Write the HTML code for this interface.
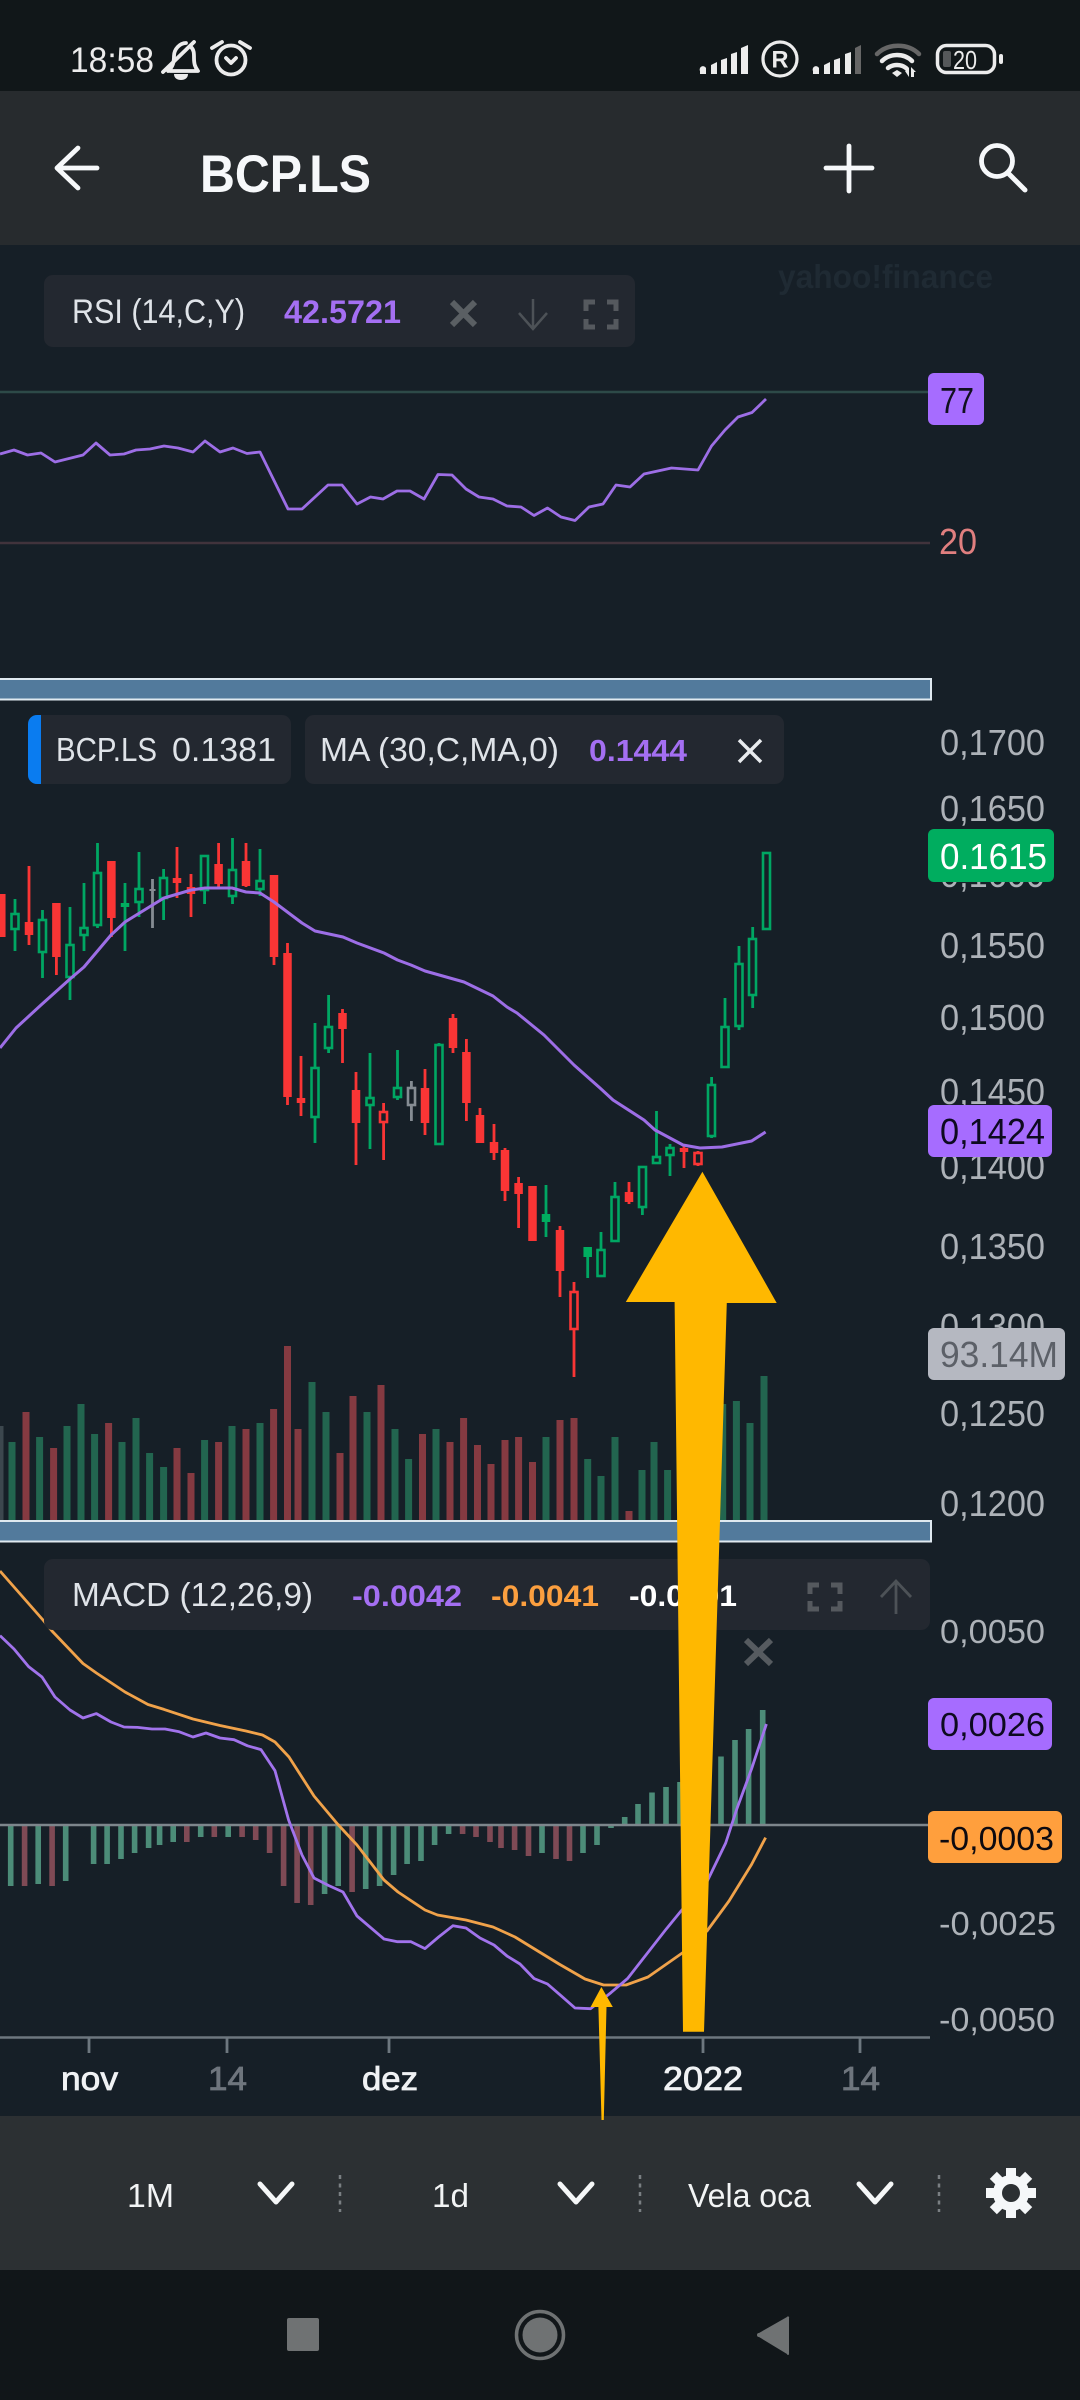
<!DOCTYPE html>
<html><head><meta charset="utf-8"><title>BCP.LS</title>
<style>html,body{margin:0;padding:0;background:#161f27}svg{display:block}text{font-family:"Liberation Sans",sans-serif}</style></head>
<body>
<svg xmlns="http://www.w3.org/2000/svg" width="1080" height="2400" viewBox="0 0 1080 2400">
<rect width="1080" height="2400" fill="#161f27"/>
<rect width="1080" height="91" fill="#111719"/>
<rect y="91" width="1080" height="154" fill="#272b2e"/>

<!-- status bar -->
<text x="70" y="72" font-size="35" fill="#ececec" textLength="84" lengthAdjust="spacingAndGlyphs">18:58</text>
<g fill="none" stroke="#ececec" stroke-width="3.800" stroke-linecap="round" stroke-linejoin="round">
<path d="M168 71c5-4 6-9 6-15 0-7 6-13 12-13M191 47c3 3 3 6 3 11 0 6 1 9 4 13H170"/>
<path d="M163 72L194 42"/>
<circle cx="231" cy="60" r="14.500"/>
<path d="M212 48l10-6M240 42l10 6M226 58l5 5 5-5"/>
</g>
<path d="M174 74h14c0 4-3 6-7 6s-7-2-7-6z" fill="#ececec"/>
<g fill="#ececec">
<path d="M700 74v-3a3 3 0 0 1 6-3v6zM711 74V65l6-3v12zM721 74V60l6-2v16zM731 74V54l6-2v22zM741 74V48l7-3v29z"/>
<path d="M813 74v-3a3 3 0 0 1 6-3v6zM824 74V65l6-3v12zM834 74V60l6-2v16zM845 74V54l6-2v22z"/>
</g>
<path d="M855 74V48l6-3v29z" fill="#666"/>
<circle cx="780" cy="59" r="17" fill="none" stroke="#ececec" stroke-width="3.200"/>
<text x="771.500" y="67.500" font-size="24" font-weight="bold" fill="#ececec" textLength="17" lengthAdjust="spacingAndGlyphs">R</text>
<g fill="none" stroke-linecap="round">
<path d="M877 54c11-11 31-11 42 0" stroke="#666" stroke-width="4.500"/>
<path d="M882 61c8-8 22-8 30 0" stroke="#ececec" stroke-width="4.500"/>
<path d="M888 68c5-4 13-4 18 0" stroke="#ececec" stroke-width="4.500"/>
</g>
<path d="M892 73l5-3 5 3-5 4z" fill="#ececec"/>
<path d="M905 71l4-4v10zM911 67l5 5h-2v5h-3z" fill="#ececec"/>
<rect x="937.500" y="45.500" width="57" height="27" rx="9" fill="none" stroke="#ececec" stroke-width="3.500"/>
<rect x="943" y="51" width="8" height="16" rx="2" fill="#55585a"/>
<rect x="999" y="54" width="4" height="10" rx="2" fill="#ececec"/>
<text x="953" y="69" font-size="26" fill="#ececec" textLength="24" lengthAdjust="spacingAndGlyphs">20</text>

<!-- header -->
<text x="200" y="192" font-size="53" font-weight="bold" fill="#f6f8fa" textLength="171" lengthAdjust="spacingAndGlyphs">BCP.LS</text>
<g fill="none" stroke="#f6f8fa" stroke-width="4.800" stroke-linecap="round" stroke-linejoin="round">
<path d="M97 168H58M78 148L57 168l21 20"/>
<path d="M849 146v45M826 168h46"/>
<circle cx="997" cy="161" r="15.500"/>
<path d="M1008 173l17 17" stroke-width="5"/>
</g>

<!-- watermark -->
<text x="778" y="288" font-size="33" font-weight="bold" fill="#1f2a33" textLength="215" lengthAdjust="spacingAndGlyphs">yahoo!finance</text>

<!-- RSI panel -->
<path d="M0 392H928" stroke="#2d4a48" stroke-width="2.500"/>
<path d="M0 543H930" stroke="#41333c" stroke-width="2.500"/>
<path fill="none" stroke="#9d6ee6" stroke-width="2.800" stroke-linejoin="round" d="M0 454L14 450 27.500 455 41 453 55 462 83 455 96 443 110 455 124 454 136 450 150 449 164 446 178 448 193 452 205 441 220 452 233 448 247 453.500 260 452 288 509 302 509 328 485 342 485 357 504 370.500 497 383 499 397 491 410 491 424 499 438 474.500 452 475 466 489 479 497 493 499 507 506 521 507 534 515.500 547.500 508 561 517 575 520.500 589 507 603 504 616 485 630 487 644 474 671.500 468 698 470 711.500 446 725 430 738 417 752 412.500 766 399"/>
<rect x="44" y="275" width="591" height="72" rx="9" fill="#232830"/>
<text x="72" y="323" font-size="34" fill="#dfe3e8" textLength="173" lengthAdjust="spacingAndGlyphs">RSI (14,C,Y)</text>
<text x="284" y="323" font-size="32" font-weight="bold" fill="#a46ff2" textLength="117" lengthAdjust="spacingAndGlyphs">42.5721</text>
<path d="M452 302l23 23M475 302l-23 23" stroke="#5a5f63" stroke-width="6" fill="none"/>
<path d="M533 299v29M519 313l14 16 14-16" stroke="#4d5257" stroke-width="2.500" fill="none"/>
<path d="M586 311v-9h9M607 302h9v9M616 319v8h-9M595 327h-9v-8" stroke="#55595e" stroke-width="5" fill="none"/>
<rect x="928" y="373" width="56" height="52" rx="6" fill="#a66cff"/>
<text x="940" y="413" font-size="36" fill="#11101f" textLength="34" lengthAdjust="spacingAndGlyphs">77</text>
<text x="939" y="554" font-size="36" fill="#e07f7f" textLength="38" lengthAdjust="spacingAndGlyphs">20</text>

<!-- y axis labels (main) -->
<g font-size="36" fill="#adb2b8">
<text x="940" y="755" textLength="105" lengthAdjust="spacingAndGlyphs">0,1700</text>
<text x="940" y="821" textLength="105" lengthAdjust="spacingAndGlyphs">0,1650</text>
<text x="940" y="887" textLength="105" lengthAdjust="spacingAndGlyphs">0,1600</text>
<text x="940" y="958" textLength="105" lengthAdjust="spacingAndGlyphs">0,1550</text>
<text x="940" y="1030" textLength="105" lengthAdjust="spacingAndGlyphs">0,1500</text>
<text x="940" y="1104" textLength="105" lengthAdjust="spacingAndGlyphs">0,1450</text>
<text x="940" y="1179" textLength="105" lengthAdjust="spacingAndGlyphs">0,1400</text>
<text x="940" y="1259" textLength="105" lengthAdjust="spacingAndGlyphs">0,1350</text>
<text x="940" y="1339" textLength="105" lengthAdjust="spacingAndGlyphs">0,1300</text>
<text x="940" y="1426" textLength="105" lengthAdjust="spacingAndGlyphs">0,1250</text>
<text x="940" y="1516" textLength="105" lengthAdjust="spacingAndGlyphs">0,1200</text>
</g>

<!-- volume -->
<g fill="none" stroke-width="7">
<path stroke="#3c474e" d="M0 1426V1520"/>
<path stroke="#22654f" d="M12 1442V1520M39.600 1437V1520M67 1426V1520M81 1404V1520M94.600 1434V1520M122 1442V1520M136 1418V1520M149.600 1453V1520M163.600 1467V1520M204.600 1440V1520M232 1426V1520M260 1423V1520M312 1382V1520M326 1412V1520M367 1412V1520M395 1429V1520M408.600 1459V1520M436 1429V1520M546 1437V1520M587.700 1459V1520M601 1476V1520M615 1437V1520M642 1470V1520M654 1442V1520M667.600 1470V1520M722.700 1404V1520M736.400 1401V1520M750 1423V1520M764 1376V1520"/>
<path stroke="#853a41" d="M26 1412V1520M53.600 1448V1520M108.600 1423V1520M177 1448V1520M191 1473V1520M218.600 1442V1520M246 1429V1520M273.600 1409V1520M287.500 1346V1520M298 1429V1520M340 1453V1520M353 1396V1520M381 1385V1520M422.500 1434V1520M450 1442V1520M463.600 1418V1520M477.500 1445V1520M491 1464V1520M505 1440V1520M518.600 1437V1520M532.500 1462V1520M560 1420V1520M574 1418V1520M629 1511V1520"/>
</g>

<!-- candle wicks -->
<g fill="none" stroke-width="2.800">
<path stroke="#00a663" d="M15 899V951M42.500 910V978M70 907V1000M84 883V951M97.500 843V928M125 883V951M139 852V917M163.600 869V920M204.600 855V904M232.500 838V904M260 849V896M315 1023V1143M328.600 995V1053M370 1053V1149M397.500 1050V1100M439 1043V1144M546 1185V1237M587.700 1247V1278M601 1232V1276M615 1182V1241M642.400 1167V1215M656.500 1111V1163M670 1144V1176M711.600 1077V1138M725 998V1067M739 946V1030M752.700 927V1008"/>
<path stroke="#f93535" d="M29 866V945M56.400 903V975M111.400 861V937M177 847V898M191 874V917M218.600 843V887M246 843V887M274 875V965M287.500 943V1105M301 1056V1116M342.500 1009V1063M356 1072V1165M383.600 1103V1160M425 1069V1135M453 1014V1053M466.400 1039V1121M480 1108V1143M494 1124V1160M505 1148V1201M518.600 1177V1228M560 1226V1297M574 1282V1377M629 1182V1204M684 1145V1168M698 1151V1166"/>
<path stroke="#858c93" d="M152.500 879V928M411.400 1081V1121"/>
</g>
<!-- filled bodies -->
<g fill="none" stroke-width="8.500">
<path stroke="#f93535" d="M1.300 894V937M29 922V935M56.400 903V957M111.400 861V918M177 878V883M191 887V894M218.600 864V884M246 861V886M274 875V957M287.500 953V1097M301 1098V1103M342.500 1013V1029M356 1090V1123M425 1088V1123M453 1018V1048M466.400 1052V1103M480 1115V1143M494 1142V1153M505 1150V1191M518.600 1183V1194M532.500 1186V1241M560 1230V1271M629 1192V1202M684 1148V1152"/>
<path stroke="#00ad5f" d="M125 903V907M546 1214V1222M587.700 1247V1257"/>
<path stroke="#858c93" d="M152.500 889V891" stroke-width="6"/>
</g>
<!-- hollow bodies -->
<g fill="#161f27" stroke-width="2.600">
<g stroke="#00a663">
<rect x="11.500" y="914" width="7" height="15"/><rect x="39" y="920" width="7" height="32"/><rect x="66.500" y="945" width="7" height="32"/><rect x="80.500" y="928" width="7" height="7"/><rect x="94" y="873" width="7" height="52"/><rect x="135.500" y="889" width="7" height="13"/><rect x="160" y="878" width="7" height="20"/><rect x="201" y="856" width="7" height="34"/><rect x="229" y="870" width="7" height="26"/><rect x="256.500" y="881" width="7" height="8"/><rect x="311.500" y="1068" width="7" height="49"/><rect x="325" y="1027" width="7" height="21"/><rect x="366.500" y="1098" width="7" height="7"/><rect x="394" y="1088" width="7" height="9"/><rect x="435.500" y="1045" width="7" height="99"/><rect x="597.500" y="1250" width="7" height="26"/><rect x="611.500" y="1197" width="7" height="44"/><rect x="639" y="1167" width="7" height="40"/><rect x="653" y="1157" width="7" height="6"/><rect x="666.500" y="1148" width="7" height="7"/><rect x="708" y="1085" width="7" height="51"/><rect x="721.500" y="1027" width="7" height="40"/><rect x="735.500" y="964" width="7" height="62"/><rect x="749" y="939" width="7" height="56"/><rect x="763" y="853" width="7" height="76"/>
</g>
<g stroke="#f93535">
<rect x="380" y="1112" width="7" height="10"/><rect x="570.500" y="1292" width="7" height="37"/><rect x="694.500" y="1153" width="7" height="11"/>
</g>
<rect x="408" y="1088" width="7" height="17" stroke="#858c93"/>
</g>

<!-- MA line -->
<path fill="none" stroke="#9d6ee6" stroke-width="3" stroke-linejoin="round" d="M0 1048L16 1028 41 1005 70 979 84 967 111 935 125 922 152.500 905 164 898 191 890 205 888 232 888 246 892 260 893 274 902 302 923 315 931 343 937 357 943 384 953 397.500 960 411 965 425 971 464 982 493 996 507 1007 517 1013 544 1035 574 1065 600 1088 613 1100 644 1120 655 1130 683 1145 700 1148 722 1147 751.600 1141 765.600 1132"/>

<!-- separators -->
<rect x="-3" y="679" width="934" height="20.500" fill="#527a9c" stroke="#dfe9f0" stroke-width="2"/>
<rect x="-3" y="1521" width="934" height="20.500" fill="#527a9c" stroke="#dfe9f0" stroke-width="2"/>

<!-- main labels -->
<rect x="28" y="715" width="263" height="69" rx="9" fill="#232830"/>
<path d="M41 715h-4a9 9 0 0 0-9 9v51a9 9 0 0 0 9 9h4z" fill="#0a7cf0"/>
<text x="56" y="761" font-size="33" fill="#dfe3e8" textLength="101" lengthAdjust="spacingAndGlyphs">BCP.LS</text>
<text x="172" y="761" font-size="33" fill="#dfe3e8" textLength="104" lengthAdjust="spacingAndGlyphs">0.1381</text>
<rect x="305" y="715" width="479" height="69" rx="9" fill="#232830"/>
<text x="320" y="761" font-size="33" fill="#dfe3e8" textLength="239" lengthAdjust="spacingAndGlyphs">MA (30,C,MA,0)</text>
<text x="589" y="761" font-size="31" font-weight="bold" fill="#a46ff2" textLength="98" lengthAdjust="spacingAndGlyphs">0.1444</text>
<path d="M739 740l22 22M761 740l-22 22" stroke="#e8ebee" stroke-width="3.500" fill="none"/>

<!-- badges -->
<rect x="928" y="829" width="126" height="53" rx="6" fill="#00ad5f"/>
<text x="940" y="869" font-size="36" fill="#ffffff" textLength="107" lengthAdjust="spacingAndGlyphs">0.1615</text>
<rect x="928" y="1105" width="124" height="52" rx="6" fill="#a66cff"/>
<text x="940" y="1144" font-size="36" fill="#0d0a20" textLength="105" lengthAdjust="spacingAndGlyphs">0,1424</text>
<rect x="928" y="1328" width="137" height="52" rx="6" fill="#b5b8c1"/>
<text x="940" y="1367" font-size="36" fill="#5c6068" textLength="118" lengthAdjust="spacingAndGlyphs">93.14M</text>

<!-- MACD panel -->
<g fill="none" stroke-width="5.600">
<path stroke="#4c8c78" d="M10.700 1825V1886M38.200 1825V1884M65.700 1825V1881M93.600 1825V1864M107.100 1825V1864M121 1825V1859M134.600 1825V1853M148.600 1825V1848M159.600 1825V1845M173.200 1825V1842M200.700 1825V1837M228.200 1825V1837M324.600 1825V1894M338.200 1825V1886M365.700 1825V1889M379.600 1825V1886M393.600 1825V1875M407.100 1825V1864M421 1825V1861M434.600 1825V1845M448.600 1825V1834M542 1825V1853M583 1825V1853M597 1825V1845M611 1825V1828M624.700 1825V1817M638 1825V1804M652 1825V1792.500M666 1825V1787M680 1825V1782M721 1825V1756.500M735 1825V1740M748.600 1825V1729M762.700 1825V1710"/>
<path stroke="#7f4a55" d="M24.600 1825V1886M52.100 1825V1886M186.800 1825V1842M214.300 1825V1837M242.100 1825V1837M255.700 1825V1840M269.600 1825V1853M283.600 1825V1886M297.100 1825V1903M310.700 1825V1905M352.100 1825V1892M462.600 1825V1834M476 1825V1837M490 1825V1842M501 1825V1848M514.600 1825V1850M528.500 1825V1856M556 1825V1859M569.500 1825V1861"/>
</g>
<path d="M0 1825H928" stroke="#7d868c" stroke-width="2.500"/>
<path fill="none" stroke="#f0a24a" stroke-width="2.800" stroke-linejoin="round" d="M0 1571L43 1620 52 1631 83 1663.500 96.400 1673 125 1692 148 1704.500 164 1709.400 193 1719 220 1725.500 246 1731 262.500 1735 275 1742 289 1757 314 1796 337.500 1824 357 1845 384 1880 398 1892 425 1910 437.500 1915 466 1920 493 1927 515 1937 559 1964 585 1979 603.600 1985 626 1985 648 1977 683 1952.500 707 1931 729 1901 751.600 1864.400 765.600 1837.600"/>
<path fill="none" stroke="#a173ec" stroke-width="2.800" stroke-linejoin="round" d="M0 1635.600L14 1649 28.600 1666.600 42 1677 55 1697 70 1710 83 1718 96.400 1713.600 111 1722 124 1727 137.500 1727.400 152 1729 165 1729 178.600 1731.600 193 1737 206 1733 220 1738 234 1739.700 247.500 1745.800 261 1749.600 275 1770.700 288.600 1820 302 1855 314 1878 328.600 1885.500 343 1892 357 1916 384 1939 397.500 1941.700 411 1941.700 425 1948.600 438.600 1937 453 1925.700 466 1928 480 1938 494 1945 507 1956 520 1964 534 1978.500 547.500 1984 561 1995.700 575 2008 590.600 2008.700 611 1992.600 627.600 1978.500 666.500 1928.700 681 1911 707 1881.600 725.700 1843 736.800 1809 751.600 1768.800 766.400 1724"/>
<rect x="44" y="1559" width="886" height="71" rx="9" fill="#232830"/>
<text x="72" y="1606" font-size="33" fill="#dfe3e8" textLength="241" lengthAdjust="spacingAndGlyphs">MACD (12,26,9)</text>
<text x="352" y="1606" font-size="30" font-weight="bold" fill="#a46ff2" textLength="110" lengthAdjust="spacingAndGlyphs">-0.0042</text>
<text x="491" y="1606" font-size="30" font-weight="bold" fill="#fb9f3f" textLength="108" lengthAdjust="spacingAndGlyphs">-0.0041</text>
<text x="629" y="1606" font-size="30" font-weight="bold" fill="#ffffff" textLength="108" lengthAdjust="spacingAndGlyphs">-0.0001</text>
<path d="M810 1594v-9h9M831 1585h9v9M840 1601v8h-9M819 1609h-9v-8" stroke="#55595e" stroke-width="5" fill="none"/>
<path d="M896 1614v-33M881 1597l15-16 15 16" stroke="#4d5257" stroke-width="2.800" fill="none"/>
<path d="M746 1640l25 24M771 1640l-25 24" stroke="#565b60" stroke-width="6" fill="none"/>

<g font-size="33" fill="#adb2b8">
<text x="940" y="1643" textLength="105" lengthAdjust="spacingAndGlyphs">0,0050</text>
<text x="939" y="1935" textLength="117" lengthAdjust="spacingAndGlyphs">-0,0025</text>
<text x="939" y="2031" textLength="116" lengthAdjust="spacingAndGlyphs">-0,0050</text>
</g>
<rect x="928" y="1698" width="124" height="52" rx="6" fill="#a66cff"/>
<text x="940" y="1736" font-size="33" fill="#0d0a20" textLength="105" lengthAdjust="spacingAndGlyphs">0,0026</text>
<rect x="928" y="1811" width="134" height="52" rx="6" fill="#ff9f3d"/>
<text x="939" y="1850" font-size="33" fill="#0d0a10" textLength="115" lengthAdjust="spacingAndGlyphs">-0,0003</text>

<!-- x axis -->
<path d="M0 2037.500H930" stroke="#6d777f" stroke-width="2.500"/>
<path d="M89 2038v15M227 2038v15M389 2038v15M703 2038v15M860 2038v15" stroke="#6d777f" stroke-width="2.800"/>
<g font-size="33" stroke-width="0.800">
<text x="61" y="2090" fill="#f0f2f4" stroke="#f0f2f4" textLength="57" lengthAdjust="spacingAndGlyphs">nov</text>
<text x="208" y="2090" fill="#6e757d" stroke="#6e757d" textLength="39" lengthAdjust="spacingAndGlyphs">14</text>
<text x="362" y="2090" fill="#f0f2f4" stroke="#f0f2f4" textLength="56" lengthAdjust="spacingAndGlyphs">dez</text>
<text x="663" y="2090" fill="#f0f2f4" stroke="#f0f2f4" textLength="80" lengthAdjust="spacingAndGlyphs">2022</text>
<text x="841" y="2090" fill="#6e757d" stroke="#6e757d" textLength="39" lengthAdjust="spacingAndGlyphs">14</text>
</g>

<!-- toolbar -->
<rect y="2116" width="1080" height="154" fill="#2c3033"/>
<rect y="2270" width="1080" height="130" fill="#111619"/>
<g font-size="33" fill="#f2f4f5">
<text x="127" y="2207" textLength="47" lengthAdjust="spacingAndGlyphs">1M</text>
<text x="432" y="2207" textLength="37" lengthAdjust="spacingAndGlyphs">1d</text>
<text x="688" y="2207" textLength="123" lengthAdjust="spacingAndGlyphs">Vela oca</text>
</g>
<g fill="none" stroke="#f5f7f8" stroke-width="5" stroke-linecap="round" stroke-linejoin="round">
<path d="M260 2184l16 18 16-18M560 2184l16 18 16-18M859 2184l16 18 16-18"/>
</g>
<path d="M340 2175v37M640 2175v37M939 2175v37" stroke="#7a7f83" stroke-width="2.500" stroke-dasharray="4 4.500" fill="none"/>
<g transform="translate(1011 2193)">
<circle r="13.500" fill="none" stroke="#f5f7f9" stroke-width="9"/>
<g fill="#f5f7f9">
<rect x="-5" y="-25" width="10" height="10"/>
<rect x="-5" y="-25" width="10" height="10" transform="rotate(45)"/>
<rect x="-5" y="-25" width="10" height="10" transform="rotate(90)"/>
<rect x="-5" y="-25" width="10" height="10" transform="rotate(135)"/>
<rect x="-5" y="-25" width="10" height="10" transform="rotate(180)"/>
<rect x="-5" y="-25" width="10" height="10" transform="rotate(225)"/>
<rect x="-5" y="-25" width="10" height="10" transform="rotate(270)"/>
<rect x="-5" y="-25" width="10" height="10" transform="rotate(315)"/>
</g>
</g>

<!-- nav -->
<rect x="287" y="2318" width="32" height="33" rx="2" fill="#6f7273"/>
<circle cx="540" cy="2335" r="23.500" fill="none" stroke="#6f7273" stroke-width="3.500"/>
<circle cx="540" cy="2335" r="17.500" fill="#6f7273"/>
<path d="M789 2318v36a1 1 0 0 1-2 0l-28-17a2 2 0 0 1 0-4l28-16a1 1 0 0 1 2 1z" fill="#6f7273"/>

<!-- yellow arrows -->
<path d="M702.400 1171.700L776.700 1303H726.800L704 2031.700H683L674.600 1302H625.800z" fill="#ffb800"/>
<path d="M601.400 1987L612.800 2007H606.500L603.800 2120H601.500L598.400 2007H590.600z" fill="#ffb800"/>
</svg>
</body></html>
